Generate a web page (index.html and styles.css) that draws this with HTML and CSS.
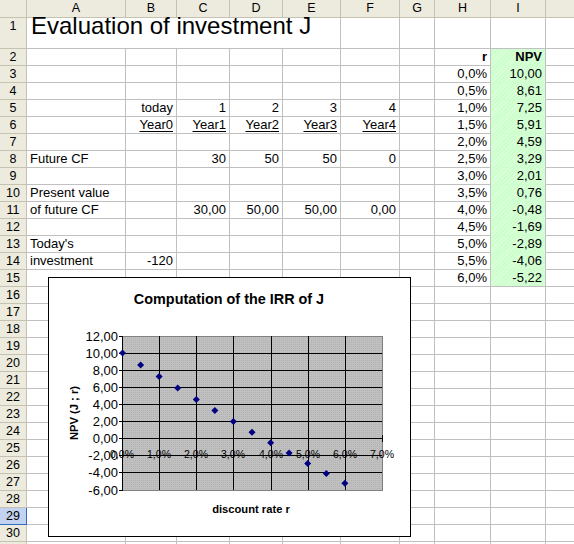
FILE: index.html
```html
<!DOCTYPE html>
<html>
<head>
<meta charset="utf-8">
<link rel="stylesheet" href="styles.css">
</head>
<body>
<div class="sheet">
  <div class="h corner"></div><div class="h">A</div><div class="h">B</div><div class="h">C</div><div class="h">D</div><div class="h">E</div><div class="h">F</div><div class="h">G</div><div class="h">H</div><div class="h">I</div><div class="h"></div>

  <div class="h">1</div><div class="c title">Evaluation of investment J</div><div class="c"></div><div class="c"></div><div class="c"></div><div class="c"></div><div class="c"></div>

  <div class="h">2</div><div class="c"></div><div class="c"></div><div class="c"></div><div class="c"></div><div class="c"></div><div class="c"></div><div class="c"></div><div class="c r b">r</div><div class="c r b g">NPV</div><div class="c"></div>
  <div class="h">3</div><div class="c"></div><div class="c"></div><div class="c"></div><div class="c"></div><div class="c"></div><div class="c"></div><div class="c"></div><div class="c r">0,0%</div><div class="c r g">10,00</div><div class="c"></div>
  <div class="h">4</div><div class="c"></div><div class="c"></div><div class="c"></div><div class="c"></div><div class="c"></div><div class="c"></div><div class="c"></div><div class="c r">0,5%</div><div class="c r g">8,61</div><div class="c"></div>
  <div class="h">5</div><div class="c"></div><div class="c r">today</div><div class="c r">1</div><div class="c r">2</div><div class="c r">3</div><div class="c r">4</div><div class="c"></div><div class="c r">1,0%</div><div class="c r g">7,25</div><div class="c"></div>
  <div class="h">6</div><div class="c"></div><div class="c r"><span class="u">Year0</span></div><div class="c r"><span class="u">Year1</span></div><div class="c r"><span class="u">Year2</span></div><div class="c r"><span class="u">Year3</span></div><div class="c r"><span class="u">Year4</span></div><div class="c"></div><div class="c r">1,5%</div><div class="c r g">5,91</div><div class="c"></div>
  <div class="h">7</div><div class="c"></div><div class="c"></div><div class="c"></div><div class="c"></div><div class="c"></div><div class="c"></div><div class="c"></div><div class="c r">2,0%</div><div class="c r g">4,59</div><div class="c"></div>
  <div class="h">8</div><div class="c">Future CF</div><div class="c"></div><div class="c r">30</div><div class="c r">50</div><div class="c r">50</div><div class="c r">0</div><div class="c"></div><div class="c r">2,5%</div><div class="c r g">3,29</div><div class="c"></div>
  <div class="h">9</div><div class="c"></div><div class="c"></div><div class="c"></div><div class="c"></div><div class="c"></div><div class="c"></div><div class="c"></div><div class="c r">3,0%</div><div class="c r g">2,01</div><div class="c"></div>
  <div class="h">10</div><div class="c">Present value</div><div class="c"></div><div class="c"></div><div class="c"></div><div class="c"></div><div class="c"></div><div class="c"></div><div class="c r">3,5%</div><div class="c r g">0,76</div><div class="c"></div>
  <div class="h">11</div><div class="c">of future CF</div><div class="c"></div><div class="c r">30,00</div><div class="c r">50,00</div><div class="c r">50,00</div><div class="c r">0,00</div><div class="c"></div><div class="c r">4,0%</div><div class="c r g">-0,48</div><div class="c"></div>
  <div class="h">12</div><div class="c"></div><div class="c"></div><div class="c"></div><div class="c"></div><div class="c"></div><div class="c"></div><div class="c"></div><div class="c r">4,5%</div><div class="c r g">-1,69</div><div class="c"></div>
  <div class="h">13</div><div class="c">Today's</div><div class="c"></div><div class="c"></div><div class="c"></div><div class="c"></div><div class="c"></div><div class="c"></div><div class="c r">5,0%</div><div class="c r g">-2,89</div><div class="c"></div>
  <div class="h">14</div><div class="c">investment</div><div class="c r">-120</div><div class="c"></div><div class="c"></div><div class="c"></div><div class="c"></div><div class="c"></div><div class="c r">5,5%</div><div class="c r g">-4,06</div><div class="c"></div>
  <div class="h">15</div><div class="c"></div><div class="c"></div><div class="c"></div><div class="c"></div><div class="c"></div><div class="c"></div><div class="c"></div><div class="c r">6,0%</div><div class="c r g last">-5,22</div><div class="c"></div>
  <div class="h">16</div><div class="c"></div><div class="c"></div><div class="c"></div><div class="c"></div><div class="c"></div><div class="c"></div><div class="c"></div><div class="c"></div><div class="c"></div><div class="c"></div>
  <div class="h">17</div><div class="c"></div><div class="c"></div><div class="c"></div><div class="c"></div><div class="c"></div><div class="c"></div><div class="c"></div><div class="c"></div><div class="c"></div><div class="c"></div>
  <div class="h">18</div><div class="c"></div><div class="c"></div><div class="c"></div><div class="c"></div><div class="c"></div><div class="c"></div><div class="c"></div><div class="c"></div><div class="c"></div><div class="c"></div>
  <div class="h">19</div><div class="c"></div><div class="c"></div><div class="c"></div><div class="c"></div><div class="c"></div><div class="c"></div><div class="c"></div><div class="c"></div><div class="c"></div><div class="c"></div>
  <div class="h">20</div><div class="c"></div><div class="c"></div><div class="c"></div><div class="c"></div><div class="c"></div><div class="c"></div><div class="c"></div><div class="c"></div><div class="c"></div><div class="c"></div>
  <div class="h">21</div><div class="c"></div><div class="c"></div><div class="c"></div><div class="c"></div><div class="c"></div><div class="c"></div><div class="c"></div><div class="c"></div><div class="c"></div><div class="c"></div>
  <div class="h">22</div><div class="c"></div><div class="c"></div><div class="c"></div><div class="c"></div><div class="c"></div><div class="c"></div><div class="c"></div><div class="c"></div><div class="c"></div><div class="c"></div>
  <div class="h">23</div><div class="c"></div><div class="c"></div><div class="c"></div><div class="c"></div><div class="c"></div><div class="c"></div><div class="c"></div><div class="c"></div><div class="c"></div><div class="c"></div>
  <div class="h">24</div><div class="c"></div><div class="c"></div><div class="c"></div><div class="c"></div><div class="c"></div><div class="c"></div><div class="c"></div><div class="c"></div><div class="c"></div><div class="c"></div>
  <div class="h">25</div><div class="c"></div><div class="c"></div><div class="c"></div><div class="c"></div><div class="c"></div><div class="c"></div><div class="c"></div><div class="c"></div><div class="c"></div><div class="c"></div>
  <div class="h">26</div><div class="c"></div><div class="c"></div><div class="c"></div><div class="c"></div><div class="c"></div><div class="c"></div><div class="c"></div><div class="c"></div><div class="c"></div><div class="c"></div>
  <div class="h">27</div><div class="c"></div><div class="c"></div><div class="c"></div><div class="c"></div><div class="c"></div><div class="c"></div><div class="c"></div><div class="c"></div><div class="c"></div><div class="c"></div>
  <div class="h">28</div><div class="c"></div><div class="c"></div><div class="c"></div><div class="c"></div><div class="c"></div><div class="c"></div><div class="c"></div><div class="c"></div><div class="c"></div><div class="c"></div>
  <div class="h sel">29</div><div class="c"></div><div class="c"></div><div class="c"></div><div class="c"></div><div class="c"></div><div class="c"></div><div class="c"></div><div class="c"></div><div class="c"></div><div class="c"></div>
  <div class="h">30</div><div class="c"></div><div class="c"></div><div class="c"></div><div class="c"></div><div class="c"></div><div class="c"></div><div class="c"></div><div class="c"></div><div class="c"></div><div class="c"></div>
  <div class="h"></div><div class="c"></div><div class="c"></div><div class="c"></div><div class="c"></div><div class="c"></div><div class="c"></div><div class="c"></div><div class="c"></div><div class="c"></div><div class="c"></div>
</div>

<div class="chart">
  <svg class="plot" width="361" height="258" viewBox="0 0 361 258">
    <defs>
      <pattern id="dots" width="2" height="2" patternUnits="userSpaceOnUse">
        <rect width="2" height="2" fill="#c0c0c0"/>
        <rect x="0" y="0" width="1" height="1" fill="#b2b2b2"/>
      </pattern>
    </defs>
    <text class="ctitle" x="180" y="26" text-anchor="middle">Computation of the IRR of J</text>
    <rect x="73.5" y="58.5" width="260" height="154" fill="url(#dots)" stroke="#808080" stroke-width="1"/>
    <g stroke="#000" stroke-width="1">
      <line x1="73" y1="75.5" x2="333" y2="75.5"/>
      <line x1="73" y1="92.5" x2="333" y2="92.5"/>
      <line x1="73" y1="109.5" x2="333" y2="109.5"/>
      <line x1="73" y1="126.5" x2="333" y2="126.5"/>
      <line x1="73" y1="143.5" x2="333" y2="143.5"/>
      <line x1="73" y1="160.5" x2="333" y2="160.5"/>
      <line x1="73" y1="177.5" x2="333" y2="177.5"/>
      <line x1="73" y1="194.5" x2="333" y2="194.5"/>
      <line x1="110.5" y1="58" x2="110.5" y2="212"/>
      <line x1="147.5" y1="58" x2="147.5" y2="212"/>
      <line x1="184.5" y1="58" x2="184.5" y2="212"/>
      <line x1="222.5" y1="58" x2="222.5" y2="212"/>
      <line x1="259.5" y1="58" x2="259.5" y2="212"/>
      <line x1="296.5" y1="58" x2="296.5" y2="212"/>
      <line x1="73.5" y1="58" x2="73.5" y2="213"/>
      <line x1="333.5" y1="157" x2="333.5" y2="164"/>
      <line x1="70" y1="58.5" x2="73" y2="58.5"/>
      <line x1="70" y1="75.5" x2="73" y2="75.5"/>
      <line x1="70" y1="92.5" x2="73" y2="92.5"/>
      <line x1="70" y1="109.5" x2="73" y2="109.5"/>
      <line x1="70" y1="126.5" x2="73" y2="126.5"/>
      <line x1="70" y1="143.5" x2="73" y2="143.5"/>
      <line x1="70" y1="160.5" x2="73" y2="160.5"/>
      <line x1="70" y1="177.5" x2="73" y2="177.5"/>
      <line x1="70" y1="194.5" x2="73" y2="194.5"/>
      <line x1="70" y1="212.5" x2="73" y2="212.5"/>
    </g>
    <g class="ylab" text-anchor="end">
      <text x="69" y="63">12,00</text>
      <text x="69" y="80">10,00</text>
      <text x="69" y="97">8,00</text>
      <text x="69" y="114">6,00</text>
      <text x="69" y="131">4,00</text>
      <text x="69" y="148">2,00</text>
      <text x="69" y="165">0,00</text>
      <text x="69" y="182">-2,00</text>
      <text x="69" y="199">-4,00</text>
      <text x="69" y="217">-6,00</text>
    </g>
    <g class="xlab" text-anchor="middle">
      <text x="73" y="180">0,0%</text>
      <text x="110" y="180">1,0%</text>
      <text x="147" y="180">2,0%</text>
      <text x="184" y="180">3,0%</text>
      <text x="222" y="180">4,0%</text>
      <text x="259" y="180">5,0%</text>
      <text x="296" y="180">6,0%</text>
      <text x="333" y="180">7,0%</text>
    </g>
    <g fill="#000080">
      <polygon points="73.5,71.6 77,75.1 73.5,78.6 70,75.1"/>
      <polygon points="91.6,83.5 95.1,87 91.6,90.5 88.1,87"/>
      <polygon points="110.1,95.1 113.6,98.6 110.1,102.1 106.6,98.6"/>
      <polygon points="128.7,106.6 132.2,110.1 128.7,113.6 125.2,110.1"/>
      <polygon points="147.3,117.9 150.8,121.4 147.3,124.9 143.8,121.4"/>
      <polygon points="165.9,129 169.4,132.5 165.9,136 162.4,132.5"/>
      <polygon points="184.4,140 187.9,143.5 184.4,147 180.9,143.5"/>
      <polygon points="203,150.7 206.5,154.2 203,157.7 199.5,154.2"/>
      <polygon points="221.6,161.3 225.1,164.8 221.6,168.3 218.1,164.8"/>
      <polygon points="240.1,171.6 243.6,175.1 240.1,178.6 236.6,175.1"/>
      <polygon points="258.7,181.9 262.2,185.4 258.7,188.9 255.2,185.4"/>
      <polygon points="277.3,191.9 280.8,195.4 277.3,198.9 273.8,195.4"/>
      <polygon points="295.9,201.8 299.4,205.3 295.9,208.8 292.4,205.3"/>
    </g>
    <text class="atitle" transform="translate(29,135) rotate(-90)" text-anchor="middle">NPV (J ; r)</text>
    <text class="atitle" x="202" y="235" text-anchor="middle">discount rate r</text>
  </svg>
</div>
</body>
</html>
```

FILE: styles.css
```css
html, body {
  margin: 0;
  padding: 0;
  width: 574px;
  height: 544px;
  overflow: hidden;
  background: #fff;
  position: relative;
}

.sheet {
  display: grid;
  grid-template-columns: 27px 99px 51px 53px 53px 58px 59px 35px 56px 55px 80px;
  grid-template-rows: 18px 31px;
  grid-auto-rows: 17px;
  width: 626px;
  font-family: "Liberation Sans", Arial, sans-serif;
  font-size: 13px;
  color: #000;
}

.sheet > div {
  box-sizing: border-box;
  border-right: 1px solid #c0c0c0;
  border-bottom: 1px solid #c0c0c0;
  white-space: nowrap;
  overflow: visible;
  line-height: 16px;
}

.h {
  background: #ecebde;
  border-color: #c5c2b2 !important;
  text-align: center;
  font-size: 12.5px;
  line-height: 16px;
}

.corner {
  background: #ecebde;
}

.c {
  padding: 0 3px;
}

.r {
  text-align: right;
}

.b {
  font-weight: bold;
}

.u {
  text-decoration: underline;
  text-underline-offset: 2px;
}

.g {
  background-color: #ccffcc;
  background-image: repeating-linear-gradient(135deg, rgba(255,255,255,0.35) 0 1px, transparent 1px 3px);
  border-bottom-color: #ccffcc !important;
}

.g.last {
  border-bottom-color: #c0c0c0 !important;
}

.title {
  grid-column: span 5;
  font-size: 24px;
  line-height: 30px;
  padding-left: 4px;
}

.sel {
  background: #c3d3ef;
  border-bottom-color: #316ac5 !important;
  border-right-color: #316ac5 !important;
}

.chart {
  position: absolute;
  left: 48px;
  top: 277px;
  width: 363px;
  height: 260px;
  box-sizing: border-box;
  border: 1px solid #000;
  background: #fff;
}

.plot {
  display: block;
  font-family: "Liberation Sans", Arial, sans-serif;
}

.ctitle {
  font-size: 14.4px;
  font-weight: bold;
}

.atitle {
  font-size: 11.2px;
  font-weight: bold;
}

.ylab text {
  font-size: 13px;
}

.xlab text {
  font-size: 10.5px;
}
```
